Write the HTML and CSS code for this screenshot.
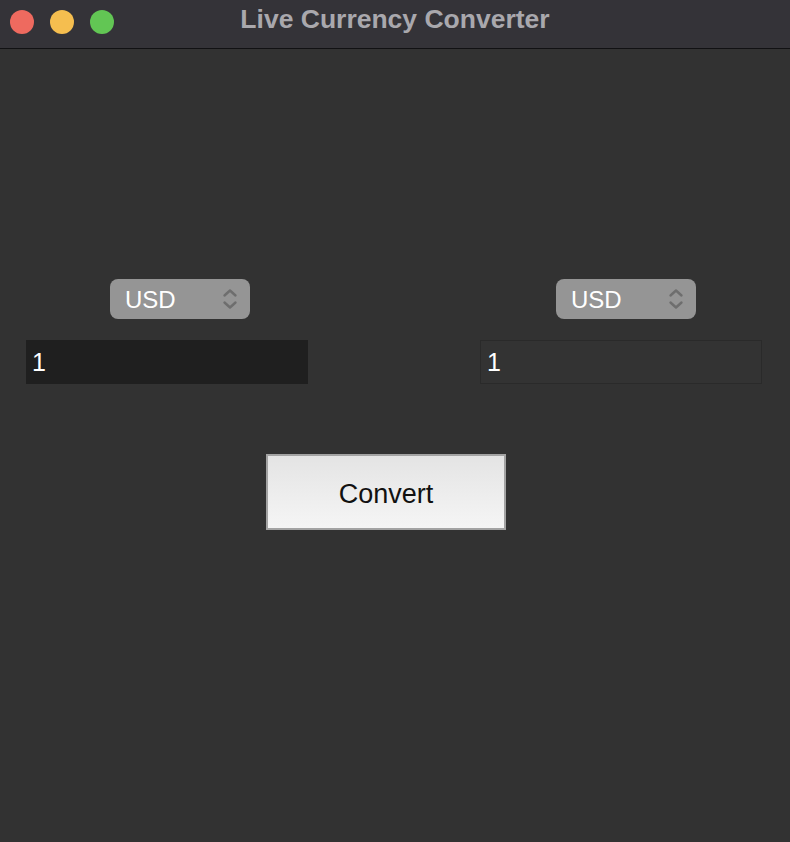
FILE: index.html
```html
<!DOCTYPE html>
<html>
<head>
<meta charset="utf-8">
<link rel="stylesheet" href="styles.css">
</head>
<body>
<div class="window">
  <div class="titlebar">
    <div class="lights">
      <span class="light red"></span>
      <span class="light yellow"></span>
      <span class="light green"></span>
    </div>
    <div class="title">Live Currency Converter</div>
  </div>
  <div class="content">
    <div class="row">
      <div class="col col-left">
        <div class="select">
          <span class="select-text">USD</span>
          <svg class="chev" width="16" height="22" viewBox="0 0 16 22"><path d="M2.5 7.5 L8 2.5 L13.5 7.5 M2.5 14.5 L8 19.5 L13.5 14.5" fill="none" stroke="#6e6e6e" stroke-width="2.4" stroke-linecap="round" stroke-linejoin="round"/></svg>
        </div>
        <div class="entry entry-dark">1</div>
      </div>
      <div class="col col-right">
        <div class="select">
          <span class="select-text">USD</span>
          <svg class="chev" width="16" height="22" viewBox="0 0 16 22"><path d="M2.5 7.5 L8 2.5 L13.5 7.5 M2.5 14.5 L8 19.5 L13.5 14.5" fill="none" stroke="#6e6e6e" stroke-width="2.4" stroke-linecap="round" stroke-linejoin="round"/></svg>
        </div>
        <div class="entry entry-light">1</div>
      </div>
    </div>
    <div class="button-row">
      <div class="button">Convert</div>
    </div>
  </div>
</div>
</body>
</html>
```
FILE: styles.css
```css
html, body {
  margin: 0;
  padding: 0;
  background: #323232;
}
.window {
  width: 790px;
  height: 842px;
  background: #323232;
  font-family: "Liberation Sans", Arial, sans-serif;
}
.titlebar {
  height: 48px;
  background: #343338;
  border-bottom: 1px solid #111113;
  display: flex;
  align-items: center;
  position: relative;
}
.lights {
  display: flex;
  gap: 16px;
  padding-left: 10px;
  padding-bottom: 4px;
}
.light {
  width: 24px;
  height: 24px;
  border-radius: 50%;
  display: block;
}
.red { background: #ee6a5f; }
.yellow { background: #f5be4f; }
.green { background: #62c654; }
.title {
  position: absolute;
  left: 0;
  right: 0;
  top: 4px;
  text-align: center;
  font-family: "Liberation Sans", Arial, sans-serif;
  font-weight: 700;
  font-size: 26.5px;
  line-height: 30px;
  color: #a9a8ad;
}
.content {
  padding-top: 230px;
}
.row {
  display: flex;
  justify-content: space-between;
  padding: 0 28px 0 26px;
}
.col {
  width: 282px;
  display: flex;
  flex-direction: column;
}
.col-left .select { margin-left: 84px; }
.col-right .select { margin-left: 76px; }
.select {
  width: 140px;
  height: 40px;
  border-radius: 8px;
  background: #959595;
  display: flex;
  align-items: center;
  justify-content: space-between;
  box-sizing: border-box;
  padding: 0 12px 0 15px;
}
.select-text {
  color: #ffffff;
  font-size: 24px;
  padding-top: 2px;
}
.chev {
  display: block;
}
.entry {
  margin-top: 21px;
  height: 44px;
  box-sizing: border-box;
  color: #ffffff;
  font-size: 25px;
  display: flex;
  align-items: center;
  padding-left: 6px;
}
.entry-dark {
  background: #1f1f1f;
}
.entry-light {
  background: #333333;
  border: 1px solid #2a2a2a;
  padding-left: 6px;
}
.button-row {
  display: flex;
  padding-top: 70px;
  padding-left: 266px;
}
.button {
  width: 240px;
  height: 76px;
  box-sizing: border-box;
  border: 2px solid #a3a3a3;
  background: linear-gradient(#e4e4e4, #f5f5f5);
  display: flex;
  align-items: center;
  justify-content: center;
  font-size: 27px;
  padding-top: 4px;
  color: #111111;
}
```
